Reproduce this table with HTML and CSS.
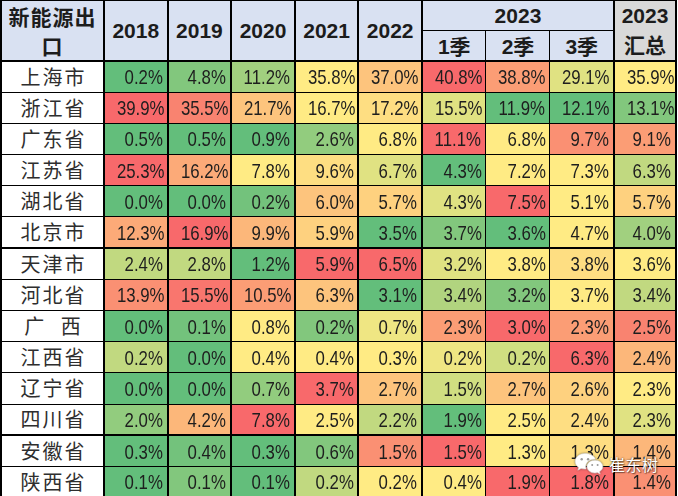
FILE: index.html
```html
<!DOCTYPE html>
<html lang="zh">
<head>
<meta charset="utf-8">
<title>新能源出口</title>
<link rel="stylesheet" href="styles.css">
</head>
<body>
<div class="page">
<table class="sheet">
<colgroup>
<col class="w-name"><col class="w-y"><col class="w-y"><col class="w-y"><col class="w-y"><col class="w-y"><col class="w-q"><col class="w-q"><col class="w-q"><col class="w-t">
</colgroup>
<thead>
<tr class="h1">
<th rowspan="2" class="hname">新能源出<br>口</th>
<th rowspan="2">2018</th>
<th rowspan="2">2019</th>
<th rowspan="2">2020</th>
<th rowspan="2">2021</th>
<th rowspan="2">2022</th>
<th colspan="3" class="hyear">2023</th>
<th rowspan="2" class="htot">2023<br><span class="cjk">汇总</span></th>
</tr>
<tr class="h2">
<th class="q1">1<span class="cjk">季</span></th>
<th class="q2">2<span class="cjk">季</span></th>
<th class="q3">3<span class="cjk">季</span></th>
</tr>
</thead>
<tbody>
<tr><td class="name">上海市</td><td class="c0"><span class="v">0.2%</span></td><td class="c2"><span class="v">4.8%</span></td><td class="c4"><span class="v">11.2%</span></td><td class="c10"><span class="v">35.8%</span></td><td class="c13"><span class="v">37.0%</span></td><td class="q1 c20"><span class="v">40.8%</span></td><td class="q2 c16"><span class="v">38.8%</span></td><td class="q3 c8"><span class="v">29.1%</span></td><td class="c10"><span class="v">35.9%</span></td></tr>
<tr><td class="name">浙江省</td><td class="c20"><span class="v">39.9%</span></td><td class="c18"><span class="v">35.5%</span></td><td class="c13"><span class="v">21.7%</span></td><td class="c10"><span class="v">16.7%</span></td><td class="c11"><span class="v">17.2%</span></td><td class="q1 c8"><span class="v">15.5%</span></td><td class="q2 c0"><span class="v">11.9%</span></td><td class="q3 c0"><span class="v">12.1%</span></td><td class="c2"><span class="v">13.1%</span></td></tr>
<tr><td class="name">广东省</td><td class="c0"><span class="v">0.5%</span></td><td class="c0"><span class="v">0.5%</span></td><td class="c0"><span class="v">0.9%</span></td><td class="c3"><span class="v">2.6%</span></td><td class="c10"><span class="v">6.8%</span></td><td class="q1 c20"><span class="v">11.1%</span></td><td class="q2 c10"><span class="v">6.8%</span></td><td class="q3 c17"><span class="v">9.7%</span></td><td class="c16"><span class="v">9.1%</span></td></tr>
<tr><td class="name">江苏省</td><td class="c20"><span class="v">25.3%</span></td><td class="c15"><span class="v">16.2%</span></td><td class="c10"><span class="v">7.8%</span></td><td class="c11"><span class="v">9.6%</span></td><td class="c8"><span class="v">6.7%</span></td><td class="q1 c0"><span class="v">4.3%</span></td><td class="q2 c10"><span class="v">7.2%</span></td><td class="q3 c10"><span class="v">7.3%</span></td><td class="c6"><span class="v">6.3%</span></td></tr>
<tr><td class="name">湖北省</td><td class="c0"><span class="v">0.0%</span></td><td class="c0"><span class="v">0.0%</span></td><td class="c1"><span class="v">0.2%</span></td><td class="c13"><span class="v">6.0%</span></td><td class="c12"><span class="v">5.7%</span></td><td class="q1 c8"><span class="v">4.3%</span></td><td class="q2 c20"><span class="v">7.5%</span></td><td class="q3 c10"><span class="v">5.1%</span></td><td class="c12"><span class="v">5.7%</span></td></tr>
<tr class="sep"><td class="name">北京市</td><td class="c15"><span class="v">12.3%</span></td><td class="c20"><span class="v">16.9%</span></td><td class="c14"><span class="v">9.9%</span></td><td class="c12"><span class="v">5.9%</span></td><td class="c0"><span class="v">3.5%</span></td><td class="q1 c2"><span class="v">3.7%</span></td><td class="q2 c0"><span class="v">3.6%</span></td><td class="q3 c10"><span class="v">4.7%</span></td><td class="c4"><span class="v">4.0%</span></td></tr>
<tr><td class="name">天津市</td><td class="c6"><span class="v">2.4%</span></td><td class="c6"><span class="v">2.8%</span></td><td class="c0"><span class="v">1.2%</span></td><td class="c20"><span class="v">5.9%</span></td><td class="c20"><span class="v">6.5%</span></td><td class="q1 c8"><span class="v">3.2%</span></td><td class="q2 c10"><span class="v">3.8%</span></td><td class="q3 c11"><span class="v">3.8%</span></td><td class="c10"><span class="v">3.6%</span></td></tr>
<tr><td class="name">河北省</td><td class="c17"><span class="v">13.9%</span></td><td class="c19"><span class="v">15.5%</span></td><td class="c16"><span class="v">10.5%</span></td><td class="c13"><span class="v">6.3%</span></td><td class="c0"><span class="v">3.1%</span></td><td class="q1 c5"><span class="v">3.4%</span></td><td class="q2 c2"><span class="v">3.2%</span></td><td class="q3 c10"><span class="v">3.7%</span></td><td class="c6"><span class="v">3.4%</span></td></tr>
<tr><td class="name gx">广 西</td><td class="c0"><span class="v">0.0%</span></td><td class="c1"><span class="v">0.1%</span></td><td class="c10"><span class="v">0.8%</span></td><td class="c2"><span class="v">0.2%</span></td><td class="c9"><span class="v">0.7%</span></td><td class="q1 c16"><span class="v">2.3%</span></td><td class="q2 c20"><span class="v">3.0%</span></td><td class="q3 c16"><span class="v">2.3%</span></td><td class="c18"><span class="v">2.5%</span></td></tr>
<tr><td class="name">江西省</td><td class="c6"><span class="v">0.2%</span></td><td class="c0"><span class="v">0.0%</span></td><td class="c10"><span class="v">0.4%</span></td><td class="c10"><span class="v">0.4%</span></td><td class="c10"><span class="v">0.3%</span></td><td class="q1 c9"><span class="v">0.2%</span></td><td class="q2 c7"><span class="v">0.2%</span></td><td class="q3 c20"><span class="v">6.3%</span></td><td class="c14"><span class="v">2.4%</span></td></tr>
<tr><td class="name">辽宁省</td><td class="c0"><span class="v">0.0%</span></td><td class="c0"><span class="v">0.0%</span></td><td class="c3"><span class="v">0.7%</span></td><td class="c20"><span class="v">3.7%</span></td><td class="c13"><span class="v">2.7%</span></td><td class="q1 c7"><span class="v">1.5%</span></td><td class="q2 c13"><span class="v">2.7%</span></td><td class="q3 c12"><span class="v">2.6%</span></td><td class="c10"><span class="v">2.3%</span></td></tr>
<tr class="sep"><td class="name">四川省</td><td class="c3"><span class="v">2.0%</span></td><td class="c14"><span class="v">4.2%</span></td><td class="c20"><span class="v">7.8%</span></td><td class="c10"><span class="v">2.5%</span></td><td class="c6"><span class="v">2.2%</span></td><td class="q1 c0"><span class="v">1.9%</span></td><td class="q2 c10"><span class="v">2.5%</span></td><td class="q3 c11"><span class="v">2.4%</span></td><td class="c8"><span class="v">2.3%</span></td></tr>
<tr><td class="name">安徽省</td><td class="c0"><span class="v">0.3%</span></td><td class="c1"><span class="v">0.4%</span></td><td class="c0"><span class="v">0.3%</span></td><td class="c2"><span class="v">0.6%</span></td><td class="c17"><span class="v">1.5%</span></td><td class="q1 c20"><span class="v">1.5%</span></td><td class="q2 c10"><span class="v">1.3%</span></td><td class="q3 c11"><span class="v">1.3%</span></td><td class="c14"><span class="v">1.4%</span></td></tr>
<tr><td class="name">陕西省</td><td class="c0"><span class="v">0.1%</span></td><td class="c2"><span class="v">0.1%</span></td><td class="c0"><span class="v">0.1%</span></td><td class="c6"><span class="v">0.2%</span></td><td class="c10"><span class="v">0.2%</span></td><td class="q1 c10"><span class="v">0.4%</span></td><td class="q2 c20"><span class="v">1.9%</span></td><td class="q3 c20"><span class="v">1.8%</span></td><td class="c17"><span class="v">1.4%</span></td></tr>
</tbody>
</table>
<div class="mark">
<svg class="wechat" width="30" height="24" viewBox="0 0 30 24" aria-hidden="true">
<path d="M11 1.5C5.5 1.5 1.2 5 1.2 9.4c0 2.5 1.4 4.6 3.5 6l-.9 2.8 3.3-1.7c1.2.3 2.4.5 3.900.5.4 0 .8 0 1.100-.1-.3-.8-.4-1.600-.4-2.400 0-4.100 3.900-7.300 8.800-7.300h.8C20.600 4 16.300 1.500 11 1.500z" class="b1"/>
<path d="M28.8 14.6c0-3.6-3.6-6.4-7.9-6.4s-7.9 2.8-7.9 6.4 3.6 6.4 7.9 6.4c.9 0 1.8-.1 2.6-.4l2.7 1.5-.7-2.4c2-1.2 3.3-3 3.3-5.1z" class="b2"/>
<circle cx="7.7" cy="7.3" r="1.2" class="eye"/><circle cx="14.1" cy="7.3" r="1.2" class="eye"/>
<circle cx="18.2" cy="13" r="1" class="eye"/><circle cx="23.6" cy="13" r="1" class="eye"/>
</svg>
<span class="mark-text">崔东树</span>
</div>
</div>
</body>
</html>
```

FILE: styles.css
```css
html, body {
  margin: 0;
  padding: 0;
  background: #ffffff;
}

.page {
  position: relative;
  width: 678px;
  height: 496px;
  overflow: hidden;
}

.sheet {
  border-collapse: collapse;
  table-layout: fixed;
  width: 677px;
  color: #1c1c1c;
}

.w-name { width: 103px; }
.w-y { width: 63.6px; }
.w-q { width: 64px; }
.w-t { width: 62px; }

.sheet th,
.sheet td {
  border-style: solid;
  border-color: #000;
  border-width: 1px 2px;
  padding: 0;
  line-height: 1;
  white-space: nowrap;
  overflow: hidden;
}

.sheet th {
  background: #d9e1f2;
  font-family: "Liberation Sans", Arial, sans-serif;
  font-weight: bold;
  font-size: 21px;
  text-align: center;
  vertical-align: middle;
}

.sheet thead tr.h1 th { border-top-width: 1px; }
.sheet thead tr.h1 { height: 28px; }
.sheet thead tr.h2 { height: 28px; }
.sheet thead tr.h2 th,
.sheet thead tr.h1 th[rowspan] { border-bottom-width: 2px; }

.sheet th.hname {
  font-family: "Noto Sans CJK SC", sans-serif;
  font-size: 21px;
  line-height: 29px;
  letter-spacing: 1px;
  white-space: normal;
}

.sheet th.htot {
  background: #d9d9d9;
  line-height: 29px;
}

.cjk {
  font-family: "Noto Sans CJK SC", sans-serif;
  font-weight: bold;
}

.sheet th.q1, .sheet td.q1 { border-right-width: 1px; }
.sheet th.q2, .sheet td.q2 { border-left-width: 1px; border-right-width: 1px; }
.sheet th.q3, .sheet td.q3 { border-left-width: 1px; }

.sheet tbody tr { height: 31.2px; }
.sheet tbody tr.sep td { border-bottom-width: 2px; }
.sheet tbody tr:last-child td { border-bottom-width: 2px; }

.sheet td {
  font-family: "Liberation Sans", Arial, sans-serif;
  font-size: 21px;
  text-align: right;
  padding-right: 4px;
  vertical-align: middle;
}

.v {
  display: inline-block;
  transform: scaleX(0.8);
  transform-origin: right center;
  color: #1e1e1e;
}

.sheet td.name {
  background: #ffffff;
  font-family: "Noto Sans CJK SC", sans-serif;
  font-size: 20px;
  font-weight: normal;
  text-align: center;
  letter-spacing: 2px;
  padding: 0 0 0 2px;
  color: #2e2e2e;
}

.sheet td.gx { word-spacing: 8px; }

.c0 { background: #63be7b; }
.c1 { background: #73c27c; }
.c2 { background: #82c77d; }
.c3 { background: #92cc7e; }
.c4 { background: #a1d07f; }
.c5 { background: #b1d47f; }
.c6 { background: #c1d980; }
.c7 { background: #d0de81; }
.c8 { background: #e0e282; }
.c9 { background: #efe683; }
.c10 { background: #ffeb84; }
.c11 { background: #fede82; }
.c12 { background: #fed17f; }
.c13 { background: #fdc47d; }
.c14 { background: #fcb77a; }
.c15 { background: #fcaa78; }
.c16 { background: #fb9d75; }
.c17 { background: #fa9073; }
.c18 { background: #f98370; }
.c19 { background: #f9766e; }
.c20 { background: #f8696b; }

.mark {
  position: absolute;
  left: 574px;
  top: 452px;
  display: flex;
  align-items: center;
  gap: 5px;
}

.wechat {
  display: block;
  filter: drop-shadow(0 0 1px rgba(0, 0, 0, 0.45));
}

.wechat .b1,
.wechat .b2 {
  fill: #ffffff;
  stroke: #d8d8d8;
  stroke-width: 0.6;
}

.wechat .eye { fill: #9a9a9a; }

.mark-text {
  font-family: "Noto Sans CJK SC", sans-serif;
  font-size: 16px;
  color: #ffffff;
  letter-spacing: 0.5px;
  text-shadow: 0 0 2px rgba(0, 0, 0, 0.7), 1px 1px 1px rgba(0, 0, 0, 0.4);
}
```
